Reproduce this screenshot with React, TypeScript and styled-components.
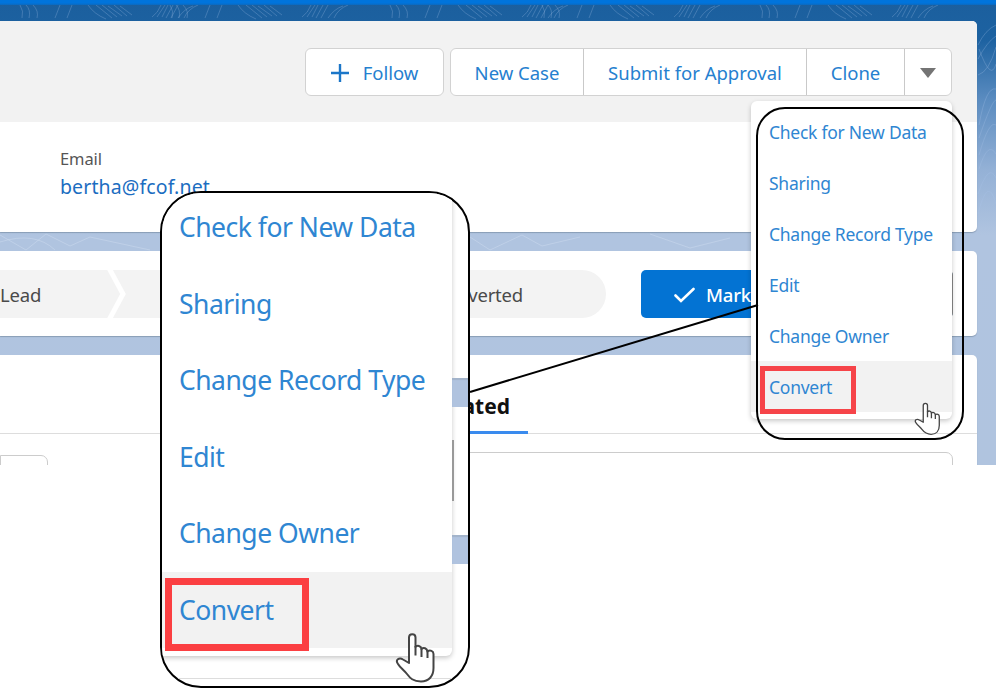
import React from "react";
import styled, { createGlobalStyle, css } from "styled-components";

const GlobalStyle = createGlobalStyle`
  * { box-sizing: border-box; }
  body { margin: 0; background: #fff; font-family: "Noto Sans", "Open Sans", sans-serif; }
`;

const Page = styled.div`
  position: relative;
  width: 997px;
  height: 688px;
  overflow: hidden;
  background: #fff;
`;

const AppWindow = styled.div`
  position: relative;
  width: 996px;
  height: 465px;
  overflow: hidden;
  padding: 21px 19px 0 0;
  display: flex;
  flex-direction: column;
  gap: 19px;
  background: linear-gradient(#1b5f9e 0, #1d62a1 40px, #5b8cc0 100px, #94b1d6 170px, #b0c4e0 235px, #b0c4df 100%);
`;

const Contours = styled.svg`
  position: absolute;
  inset: 0;
`;

const TopBar = styled.div`
  position: absolute;
  inset: 0 0 auto 0;
  height: 5px;
  background: linear-gradient(#0074dc 60%, #0d69bd);
`;

const Card = styled.section<{ $height: number }>`
  position: relative;
  flex: 0 0 ${(p) => p.$height}px;
  background: #fff;
  border-radius: 0 5px 5px 0;
  box-shadow: 0 1px 1px rgba(80, 100, 120, 0.4);
  overflow: hidden;
`;

const ActionBar = styled.header`
  height: 101px;
  padding: 27px 25px 0 0;
  display: flex;
  justify-content: flex-end;
  align-items: flex-start;
  gap: 6px;
  background: #f2f2f2;
`;

const ButtonGroup = styled.div`
  display: flex;
  height: 48px;
  border: 1px solid #d2d2d2;
  border-radius: 6px;
  background: #fff;
`;

const ActionButton = styled.button<{ $width: number }>`
  width: ${(p) => p.$width}px;
  padding: 2px 0 0;
  border: 0;
  display: flex;
  align-items: center;
  justify-content: center;
  gap: 14px;
  background: none;
  color: #2580cf;
  font: 400 18.5px/24px "Noto Sans", sans-serif;
  white-space: nowrap;
  & + & { border-left: 1px solid #c9c9c9; }
`;

const Field = styled.div`
  padding: 26px 0 0 60px;
  display: flex;
  flex-direction: column;
`;

const FieldLabel = styled.span`
  color: #555;
  font-size: 16.5px;
  line-height: 22px;
  letter-spacing: -0.1px;
`;

const FieldLink = styled.a`
  margin-top: 4px;
  color: #1b6dc1;
  font-size: 19.5px;
  line-height: 26px;
  letter-spacing: 0.12px;
`;

const PathRow = styled.div`
  display: flex;
  align-items: center;
  justify-content: space-between;
  padding: 19px 24px 0 0;
`;

const Stages = styled.div`
  display: flex;
  width: 606px;
  height: 48px;
  align-items: center;
  justify-content: space-between;
  padding-right: 83px;
  border-radius: 0 24px 24px 0;
  background: #f3f3f3;
  color: #4a4a4a;
  font-size: 18.5px;
  letter-spacing: -0.2px;
`;

const StageDivider = styled.svg`
  display: block;
  margin: 0 242px 0 0;
`;

const MarkButton = styled.button`
  width: 312px;
  height: 48px;
  padding: 2px 0 0 33px;
  display: flex;
  align-items: center;
  gap: 11px;
  border: 0;
  border-right: 1px solid #888;
  border-radius: 5px;
  background: #0373d3;
  color: #fff;
  font: 500 18.5px/24px "Noto Sans", sans-serif;
  letter-spacing: -0.2px;
`;

const TabStrip = styled.div`
  height: 79px;
  padding-left: 408px;
  border-bottom: 1px solid #ddd;
  display: flex;
`;

const Tab = styled.div`
  width: 120px;
  height: 79px;
  padding: 38px 18px 0 0;
  text-align: right;
  border-bottom: 3px solid #3a8bee;
  color: #111;
  font-size: 21px;
  font-weight: 700;
  line-height: 26px;
`;

const PanelRow = styled.div`
  display: flex;
  align-items: flex-start;
  justify-content: space-between;
  padding: 18px 24px 0 0;
`;

const PanelEdge = styled.div<{ $width: number; $drop?: number }>`
  width: ${(p) => p.$width}px;
  height: 30px;
  margin-top: ${(p) => p.$drop ?? 0}px;
  border: 1px solid #ccc;
  border-radius: 0 7px 0 0;
`;

/* The row list is shared by the drop-down and its enlarged copy. */
const Menu = styled.ul<{ $large?: boolean }>`
  margin: 0;
  list-style: none;
  background: #fff;
  color: #2f86d2;
  box-shadow: 0 2px 5px rgba(0, 0, 0, 0.22);
  ${(p) =>
    p.$large
      ? css`
          flex: 0 0 290px;
          height: 467px;
          padding: 0;
          margin-top: -4px;
          border-radius: 0 0 6px 0;
          font-size: 26.5px;
          letter-spacing: -0.5px;
        `
      : css`
          position: absolute;
          left: 751px;
          top: 101px;
          width: 201px;
          height: 318px;
          padding: 5px 0 0;
          border-radius: 6px;
          font-size: 17.5px;
          letter-spacing: -0.26px;
        `}
`;

const MenuItem = styled.li<{ $large?: boolean; $active?: boolean }>`
  display: flex;
  align-items: center;
  height: ${(p) => (p.$large ? "76.5px" : "51px")};
  padding-left: ${(p) => (p.$large ? 17 : 18)}px;
  background: ${(p) => (p.$active ? "#f2f2f2" : "transparent")};
  white-space: nowrap;
`;

const CalloutOutline = styled.div`
  position: absolute;
  left: 756px;
  top: 107px;
  width: 208px;
  height: 333px;
  border: 2px solid #000;
  border-radius: 29px;
`;

const Callout = styled.div`
  position: absolute;
  left: 160px;
  top: 191px;
  width: 310px;
  height: 497px;
  display: flex;
  align-items: flex-start;
  overflow: hidden;
  border: 2px solid #000;
  border-radius: 41px;
  background: #fff;
`;

const CalloutSide = styled.div`
  flex: 1;
  display: flex;
  flex-direction: column;
  padding-top: 185px;
`;

const Band = styled.div`
  height: 29px;
  background: #b0c3df;
  box-shadow: inset 0 2px 1px #a2b3ca;
`;

const EdgeLine = styled.div`
  width: 2px;
  height: 61px;
  margin: 33px 0 34px;
  background: #999;
`;

const CalloutRule = styled.div`
  position: absolute;
  left: 0;
  right: 0;
  bottom: 7px;
  height: 1px;
  background: #ddd;
`;

const Highlight = styled.div<{ $large?: boolean }>`
  position: absolute;
  ${(p) =>
    p.$large
      ? css`left: 165px; top: 578px; width: 144px; height: 73px; border: 7px solid #fb3f42;`
      : css`left: 760px; top: 366px; width: 96px; height: 48px; border: 5px solid #f64449;`}
`;

const Connector = styled.svg`
  position: absolute;
  left: 468px;
  top: 303px;
`;

const CursorSvg = styled.svg<{ $large?: boolean }>`
  position: absolute;
  left: ${(p) => (p.$large ? 395 : 913.5)}px;
  top: ${(p) => (p.$large ? 632 : 402)}px;
`;

const ITEMS = ["Check for New Data", "Sharing", "Change Record Type", "Edit", "Change Owner", "Convert"];

function ActionsMenu({ large }: { large?: boolean }) {
  return (
    <Menu $large={large}>
      {ITEMS.map((label) => (
        <MenuItem key={label} $large={large} $active={label === "Convert"}>
          {label}
        </MenuItem>
      ))}
    </Menu>
  );
}

function HandCursor({ large }: { large?: boolean }) {
  return (
    <CursorSvg $large={large} width={large ? 41 : 27} height={large ? 52 : 34} viewBox="0 0 41 52">
      <path
        d="M14 31V5.5C14 1 20.500 1 20.500 5.500V15C22 13 26 13.500 26.500 17C28.500 15 32 16 32.500 19.500C35 17.500 38.500 19 38.500 22V36C38.500 44 34 49.500 26 49.500C18 49.500 15 46 12 42C9 38 5 35.500 3 32C0 28 4 25 8 27.500Z"
        fill="#fff"
        stroke="#444"
        strokeWidth="2"
        strokeLinejoin="round"
      />
      <path d="M20.500 14V23.500M26.500 17V25M32.500 19V26" fill="none" stroke="#444" strokeWidth="2" />
    </CursorSvg>
  );
}

function BackgroundLines() {
  const tiles = [-220, 0, 150, 370, 522, 740];
  return (
    <Contours width="996" height="465">
      <g fill="none" stroke="#a9c5e8" strokeOpacity="0.27">
        {tiles.map((x, i) => (
          <g key={i} transform={`translate(${x} 0)`}>
            <path d="M88 5Q94 14 106 19M96 5L112 18M102 5L117 17M108 6L122 16M114 5L127 16M120 6L132 15" />
            <path d="M152 17Q158 13 161 5M157 17L165 5M162 17L168 5M166 18L173 5M171 18L178 5M178 18Q184 9 193 6M184 18Q188 9 198 5" />
            <path d="M20 5Q24 11 22 18M26 5Q31 10 29 18M33 5Q39 11 37 18M55 18L60 5M67 18L72 5" />
          </g>
        ))}
        <path d="M978 45Q985 30 996 25M978 59Q987 42 996 36M978 75Q989 72 996 47M979 49Q991 82 996 64M979 125Q986 86 996 89M979 138Q992 100 996 100M979 155Q989 120 996 125M979 169Q988 140 996 154M978 194Q989 162 996 178M978 214Q988 174 996 204" />
      </g>
      <path
        d="M0 235L26 250L46 234L70 246L90 237L150 250M0 242Q35 231 55 250M470 237L490 250L522 235L542 246L580 237M650 234L690 248L730 238"
        fill="none"
        stroke="#d5e2f2"
        strokeOpacity="0.4"
      />
    </Contours>
  );
}

export default function App() {
  return (
    <Page>
      <GlobalStyle />
      <AppWindow>
        <BackgroundLines />
        <TopBar />
        <Card $height={211}>
          <ActionBar>
            <ButtonGroup>
              <ActionButton $width={137}>
                <svg width="18" height="18" viewBox="0 0 18 18">
                  <path d="M9 0V18M0 9H18" stroke="#1b76c8" strokeWidth="2.4" />
                </svg>
                Follow
              </ActionButton>
            </ButtonGroup>
            <ButtonGroup>
              <ActionButton $width={132}>New Case</ActionButton>
              <ActionButton $width={223}>Submit for Approval</ActionButton>
              <ActionButton $width={98}>Clone</ActionButton>
              <ActionButton $width={47} aria-label="More actions">
                <svg width="17" height="11" viewBox="0 0 17 11">
                  <path d="M0 0H16L8 10Z" fill="#747474" />
                </svg>
              </ActionButton>
            </ButtonGroup>
          </ActionBar>
          <Field>
            <FieldLabel>Email</FieldLabel>
            <FieldLink>bertha@fcof.net</FieldLink>
          </Field>
        </Card>
        <Card $height={85}>
          <PathRow>
            <Stages>
              <span>Lead</span>
              <StageDivider width="22" height="48" viewBox="0 0 22 48">
                <path d="M3 -2L17 24L3 50" fill="none" stroke="#fff" strokeWidth="5" />
              </StageDivider>
              <span>Converted</span>
            </Stages>
            <MarkButton>
              <svg width="21" height="17" viewBox="0 0 21 17">
                <path d="M1.500 8.500L7 14L19.500 2" fill="none" stroke="#fff" strokeWidth="2.600" strokeLinecap="round" />
              </svg>
              Mark
            </MarkButton>
          </PathRow>
        </Card>
        <Card $height={120}>
          <TabStrip>
            <Tab>Related</Tab>
          </TabStrip>
          <PanelRow>
            <PanelEdge $width={48} $drop={3} />
            <PanelEdge $width={650} />
          </PanelRow>
        </Card>
      </AppWindow>

      <ActionsMenu />
      <Connector width="292" height="92">
        <path d="M2 89L290 2" stroke="#000" strokeWidth="2" />
      </Connector>
      <CalloutOutline />
      <Highlight />
      <HandCursor />

      <Callout>
        <CalloutRule />
        <ActionsMenu large />
        <CalloutSide>
          <Band />
          <EdgeLine />
          <Band />
        </CalloutSide>
      </Callout>
      <Highlight $large />
      <HandCursor large />
    </Page>
  );
}
